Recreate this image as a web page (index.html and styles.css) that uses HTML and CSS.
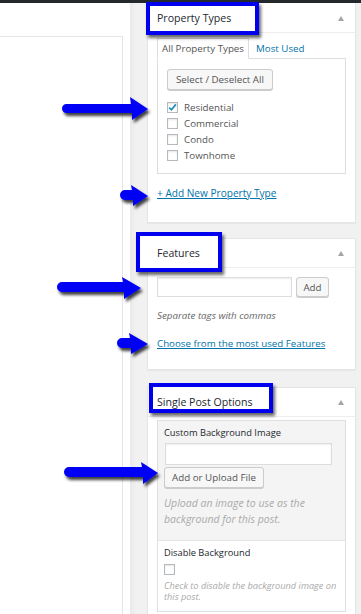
FILE: index.html
```html
<!DOCTYPE html>
<html lang="en">
<head>
<meta charset="UTF-8">
<meta name="viewport" content="width=device-width, initial-scale=1.0">
<title>Property meta boxes</title>
<link rel="stylesheet" href="styles.css">
</head>
<body>
    <div class="adminbar"></div>
    <div class="wrap">
        <div class="main">
            <div class="main-inner"></div>
        </div>
        <div class="side">

            <!-- Property Types -->
            <div class="postbox first">
                <h2 class="hndle"><span>Property Types</span><i class="toggle"></i></h2>
                <div class="inside">
                    <ul class="tabs">
                        <li class="active">All Property Types</li>
                        <li><a href="#">Most Used</a></li>
                    </ul>
                    <div class="tabs-panel">
                        <button class="button">Select / Deselect All</button>
                        <ul class="checklist">
                            <li><span class="cb checked"><svg viewBox="0 0 11 11" width="11" height="11"><path d="M2.2 5.6 L4.4 7.8 L8.9 2.4" fill="none" stroke="#1e8cbe" stroke-width="1.7"/></svg></span>Residential</li>
                            <li><span class="cb"></span>Commercial</li>
                            <li><span class="cb"></span>Condo</li>
                            <li><span class="cb"></span>Townhome</li>
                        </ul>
                    </div>
                    <a class="add-new wide" href="#">+ Add New Property Type</a>
                </div>
            </div>

            <!-- Features -->
            <div class="postbox second">
                <h2 class="hndle"><span>Features</span><i class="toggle"></i></h2>
                <div class="inside tags">
                    <div class="tag-row">
                        <input type="text" class="tag-input">
                        <button class="button small">Add</button>
                    </div>
                    <p class="howto">Separate tags with commas</p>
                    <a class="add-new" href="#">Choose from the most used Features</a>
                </div>
            </div>

            <!-- Single Post Options -->
            <div class="postbox last">
                <h2 class="hndle"><span>Single Post Options</span><i class="toggle"></i></h2>
                <div class="inside opts">
                    <div class="opt-panel">
                        <div class="opt-field grey">
                            <div class="opt-label">Custom Background Image</div>
                            <input type="text" class="opt-input">
                            <button class="button upload">Add or Upload File</button>
                            <p class="opt-desc">Upload an image to use as the background for this post.</p>
                        </div>
                        <div class="opt-field">
                            <div class="opt-label">Disable Background</div>
                            <span class="cb"></span>
                            <p class="opt-desc small">Check to disable the background image on this post.</p>
                        </div>
                    </div>
                </div>
            </div>

        </div>
    </div>

    <!-- annotations -->
    <div class="hl hl-1"></div>
    <div class="hl hl-2"></div>
    <div class="hl hl-3"></div>
    <svg class="arrows" width="361" height="614" viewBox="0 0 361 614">
        <defs>
            <filter id="sh" x="-20%" y="-50%" width="140%" height="220%">
                <feDropShadow dx="2" dy="3" stdDeviation="1.4" flood-color="#000" flood-opacity="0.75"/>
            </filter>
        </defs>
        <g fill="#0000f4" filter="url(#sh)">
            <path d="M66.5 104 L131 104 L130 97 L148 109 L132 120 L132 113 L66.5 113 A4.5 4.5 0 0 1 66.5 104 Z"/>
            <path d="M125 190 L132 190 L131 185 L148 196 L133 206 L133 200 L125 200 A5 5 0 0 1 125 190 Z"/>
            <path d="M62 282 L123 282 L122 277 L141 288 L124 299 L124 292 L62 292 A5 5 0 0 1 62 282 Z"/>
            <path d="M122 338 L130 338 L129 333 L148 344 L131 354 L131 348 L122 348 A5 5 0 0 1 122 338 Z"/>
            <path d="M69 467 L142 467 L141 462 L158 473 L143 484 L143 477 L69 477 A5 5 0 0 1 69 467 Z"/>
        </g>
    </svg>
</body>
</html>
```

FILE: styles.css
```css
/* admin screen, sidebar meta boxes */
body {
    margin: 0;
    background: #f1f1f1;
    font-family: "Open Sans", "Liberation Sans", sans-serif;
    font-size: 9.75px;
    color: #444;
    position: relative;
}
ul {
    list-style: none;
    margin: 0;
    padding: 0;
}
p {
    margin: 0;
}
.adminbar {
    height: 3px;
    background: #23282d;
}
.wrap {
    display: flex;
    align-items: stretch;
}
.main {
    width: 130px;
    background: #fff;
    padding-top: 33px;
}
.main-inner {
    width: 122px;
    height: 100%;
    border-top: 1px solid #e5e5e5;
    border-right: 1px solid #e5e5e5;
}
.side {
    width: 209px;
    padding-left: 17px;
    background: linear-gradient(to right, #e9e9e9, #f1f1f1 6px);
}
.postbox {
    background: #fff;
    border: 1px solid #e5e5e5;
    box-shadow: 0 1px 1px rgba(0, 0, 0, .04);
    margin-bottom: 16px;
}
.postbox.first {
    border-top: none;
    margin-bottom: 15px;
}
.postbox.first .hndle {
    border-top: 1px solid #fff;
}
.postbox.second {
    margin-bottom: 17px;
}
.postbox.last {
    margin-bottom: 0;
}
.hndle {
    display: flex;
    justify-content: space-between;
    align-items: center;
    height: 28px;
    margin: 0;
    padding: 0 11px 0 9px;
    border-bottom: 1px solid #eee;
    font-size: 10.6px;
    font-weight: normal;
    color: #23282d;
}
.hndle span {
    position: relative;
    z-index: 2;
}
.toggle {
    width: 0;
    height: 0;
    border-left: 3px solid transparent;
    border-right: 3px solid transparent;
    border-bottom: 5px solid #a0a5aa;
}
.inside {
    padding: 5px 9px 22px;
}

/* category tabs */
.tabs {
    display: flex;
    margin-bottom: -1px;
}
.tabs li {
    line-height: 19px;
    padding: 0 4px;
    border: 1px solid transparent;
}
.tabs li.active {
    position: relative;
    background: #fff;
    border-color: #ddd #ddd #fff;
    color: #555;
}
.tabs a {
    color: #0073aa;
    text-decoration: none;
    padding-left: 2px;
}
.tabs-panel {
    border: 1px solid #ddd;
    padding: 10px 9px 10px;
}
.button {
    font-family: inherit;
    font-size: 9.75px;
    color: #555;
    background: #f7f7f7;
    border: 1px solid #ccc;
    border-radius: 3px;
    box-shadow: 0 1px 0 #ccc;
    height: 21px;
    padding: 0 8px;
    margin: 0;
}
.checklist {
    margin-top: 9px;
}
.checklist li {
    display: flex;
    align-items: center;
    height: 16px;
    color: #555;
}
.cb {
    display: inline-block;
    box-sizing: border-box;
    width: 11px;
    height: 11px;
    border: 1px solid #b4b9be;
    background: #fff;
    box-shadow: inset 0 1px 2px rgba(0, 0, 0, .1);
    margin-right: 6px;
    position: relative;
}
.cb svg {
    position: absolute;
    left: -1px;
    top: -1px;
}
.add-new {
    display: block;
    margin-top: 12px;
    line-height: 14px;
    color: #0073aa;
    text-decoration: underline;
}
.add-new.wide {
    font-size: 10.1px;
}

/* tags box */
.tags {
    padding: 9px 9px 18px;
}
.tag-row {
    display: flex;
    gap: 4px;
}
.tag-input {
    box-sizing: border-box;
    width: 135px;
    height: 20px;
    margin: 0;
    border: 1px solid #ddd;
    box-shadow: inset 0 1px 2px rgba(0, 0, 0, .07);
}
.button.small {
    height: 20px;
    width: 33px;
    padding: 0;
}
.howto {
    margin-top: 12px;
    line-height: 14px;
    font-style: italic;
    color: #666;
}
.tags .add-new {
    margin-top: 14px;
}

/* options box */
.opts {
    padding: 3px 9px 10px;
}
.opt-panel {
    border: 1px solid #dfdfdf;
}
.opt-field {
    padding: 5px 6px 9px;
    background: #fff;
}
.opt-field.grey {
    background: #f4f4f4;
    border-bottom: 1px solid #e5e5e5;
    padding-bottom: 13px;
}
.opt-label {
    line-height: 14px;
    font-size: 9.3px;
    color: #23282d;
}
.opt-input {
    display: block;
    box-sizing: border-box;
    width: 167px;
    height: 22px;
    margin: 3px 0 0 1px;
    border: 1px solid #ddd;
    background: #fff;
    box-shadow: inset 0 1px 2px rgba(0, 0, 0, .07);
}
.button.upload {
    display: block;
    width: 100px;
    height: 21px;
    margin-top: 2px;
    padding: 0;
}
.opt-desc {
    margin-top: 7px;
    line-height: 16px;
    font-size: 10.5px;
    font-style: italic;
    color: #aaa;
}
.opt-field .cb {
    display: block;
    margin-top: 4px;
}
.opt-desc.small {
    margin-top: 5px;
    line-height: 11px;
    font-size: 9.2px;
}

/* annotations drawn over the screenshot */
.hl {
    position: absolute;
    z-index: 1;
    box-sizing: border-box;
    border: 4px solid #0000ee;
    background: #fff;
    box-shadow: 2px 3px 3px rgba(0, 0, 0, .6);
}
.hl-1 {
    left: 146px;
    top: 2px;
    width: 113px;
    height: 33px;
}
.hl-2 {
    left: 136px;
    top: 232px;
    width: 86px;
    height: 40px;
}
.hl-3 {
    left: 149px;
    top: 383px;
    width: 124px;
    height: 30px;
}
.arrows {
    position: absolute;
    left: 0;
    top: 0;
    z-index: 3;
    pointer-events: none;
}
```
